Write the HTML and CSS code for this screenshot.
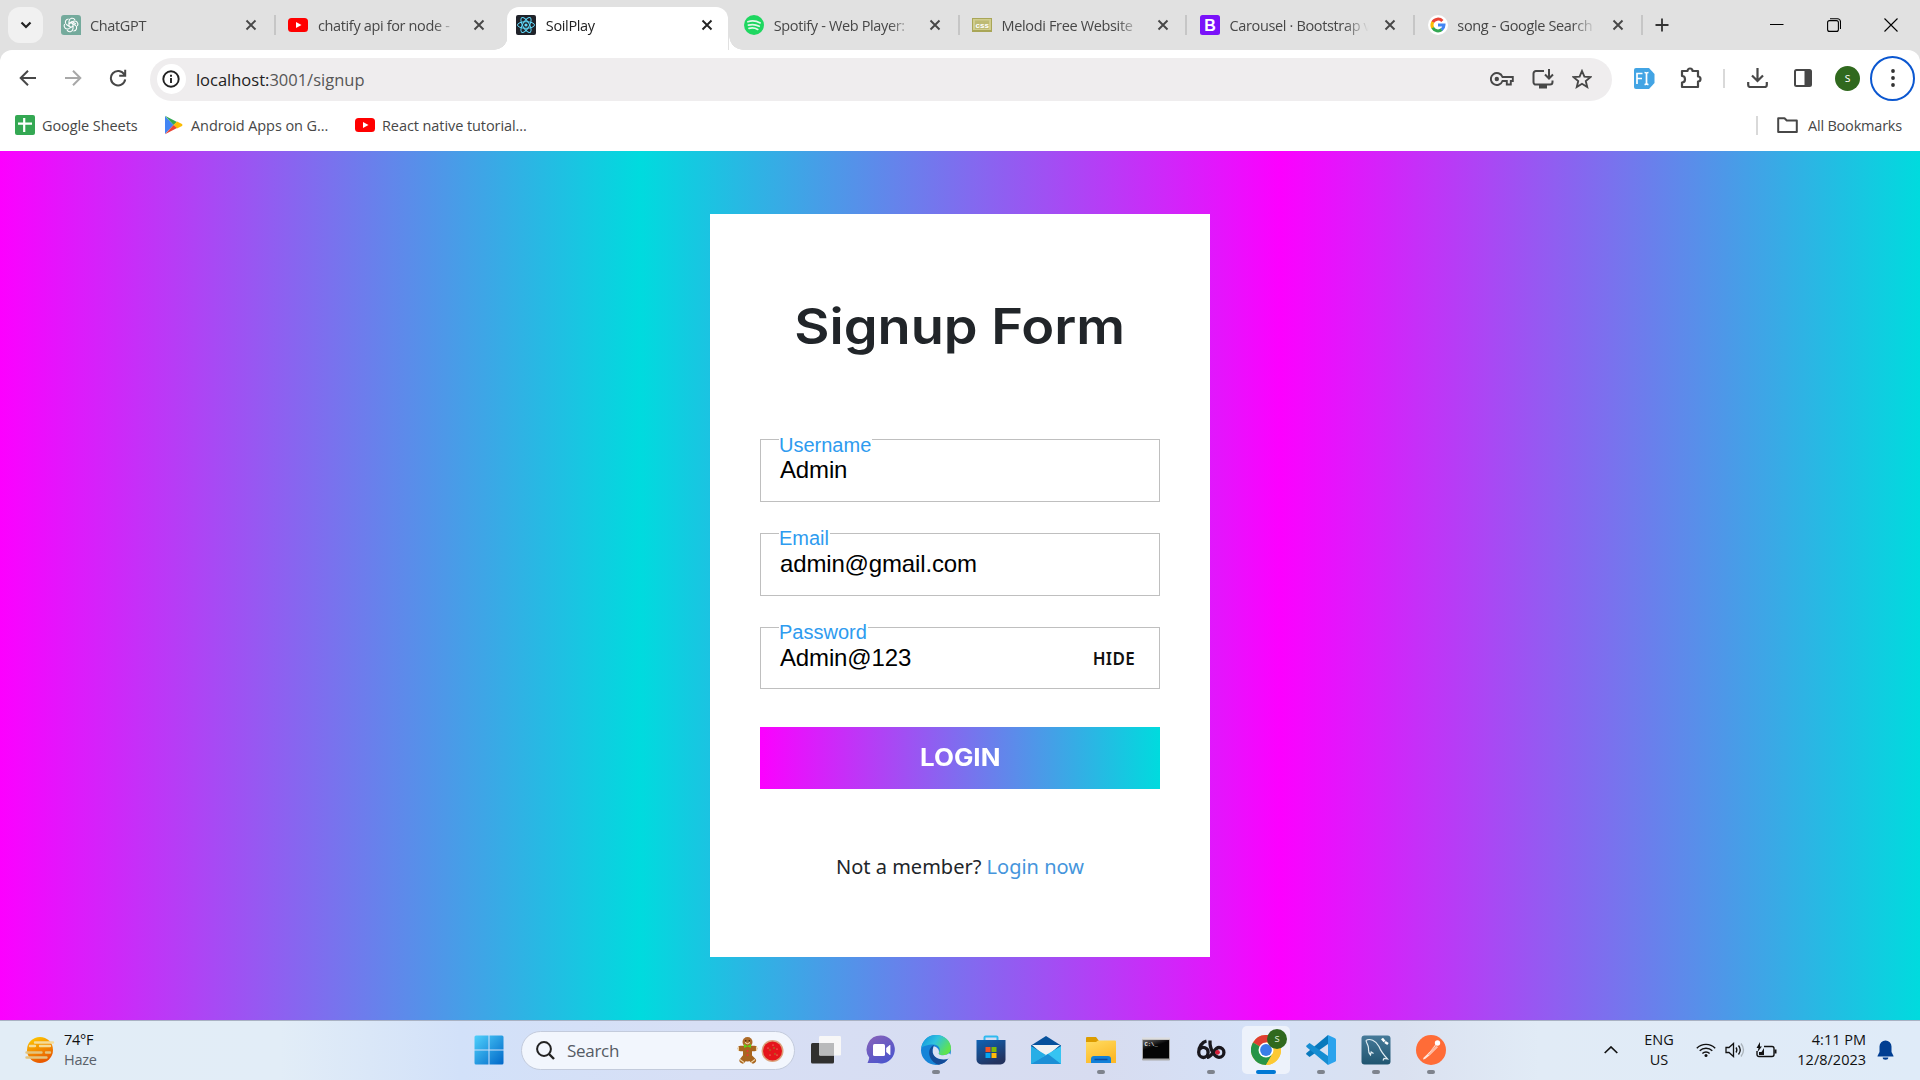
FILE: index.html
```html
<!DOCTYPE html>
<html lang="en">
<head>
<meta charset="utf-8">
<title>SoilPlay</title>
<link rel="stylesheet" href="styles.css">
</head>
<body>
<svg class="defs" width="0" height="0" aria-hidden="true">
  <defs>
    <symbol id="x" viewBox="0 0 12 12"><path d="M1.500 1.500l9 9M10.500 1.500l-9 9" fill="none" stroke="currentColor" stroke-width="1.900"/></symbol>
    <symbol id="yt" viewBox="0 0 20 20"><rect y="3" width="20" height="14" rx="3.500" fill="#f00"/><path d="M8 7l5.500 3L8 13z" fill="#fff"/></symbol>
    <linearGradient id="win" x2="1" y2="1"><stop stop-color="#4fd0fb"/><stop offset="1" stop-color="#0067c8"/></linearGradient>
    <linearGradient id="sun" x2=".4" y2="1"><stop stop-color="#ffd000"/><stop offset="1" stop-color="#e95a00"/></linearGradient>
    <linearGradient id="chat" x2=".6" y2="1"><stop stop-color="#8a63b8"/><stop offset="1" stop-color="#4d55cc"/></linearGradient>
    <linearGradient id="edge" x2="1" y2=".5"><stop stop-color="#0c8ddc"/><stop offset=".5" stop-color="#2fc2df"/><stop offset="1" stop-color="#5fe34f"/></linearGradient>
    <linearGradient id="store" x2=".5" y2="1"><stop stop-color="#0f63b5"/><stop offset="1" stop-color="#23335f"/></linearGradient>
    <linearGradient id="fold" x2=".5" y2="1"><stop stop-color="#ffdc62"/><stop offset="1" stop-color="#fdb927"/></linearGradient>
    <linearGradient id="sql" x2="0" y2="1"><stop stop-color="#467a99"/><stop offset="1" stop-color="#205570"/></linearGradient>
    <linearGradient id="cmd" x2=".5" y2="1"><stop stop-color="#666"/><stop offset=".45" stop-color="#050505"/></linearGradient>
  </defs>
</svg>
<div class="screen">
  <header class="browser">
    <div class="tabstrip">
      <button class="tab-search"><svg width="12" height="8" viewBox="0 0 12 8"><path d="M1.500 1.500L6 6l4.500-4.500" fill="none" stroke="#222" stroke-width="2.200"/></svg></button>
      <div class="tab sep">
        <svg class="fav" viewBox="0 0 20 20"><path d="M3 0h14a3 3 0 0 1 3 3v17H3a3 3 0 0 1-3-3V3a3 3 0 0 1 3-3z" fill="#74aa9c"/><g fill="none" stroke="#fff" stroke-width="1.100"><path id="petal" d="M8 11.500V6.200a3.200 3.200 0 0 1 6-1.300"/><path id="spoke" d="M8 8.300l3-1.700 4 2.300"/><use href="#petal" transform="rotate(60 10 10)"/><use href="#petal" transform="rotate(120 10 10)"/><use href="#petal" transform="rotate(180 10 10)"/><use href="#petal" transform="rotate(240 10 10)"/><use href="#petal" transform="rotate(300 10 10)"/></g></svg>
        <span class="title">ChatGPT</span><svg class="close"><use href="#x"/></svg>
      </div>
      <div class="tab">
        <svg class="fav"><use href="#yt"/></svg>
        <span class="title">chatify api for node -</span><svg class="close"><use href="#x"/></svg>
      </div>
      <div class="tab active">
        <svg class="fav" viewBox="0 0 20 20"><rect width="20" height="20" rx="2" fill="#20232a"/><g fill="none" stroke="#61dafb"><ellipse cx="10" cy="10" rx="8.500" ry="3.300"/><ellipse cx="10" cy="10" rx="8.500" ry="3.300" transform="rotate(60 10 10)"/><ellipse cx="10" cy="10" rx="8.500" ry="3.300" transform="rotate(120 10 10)"/></g><circle cx="10" cy="10" r="1.600" fill="#61dafb"/></svg>
        <span class="title">SoilPlay</span><svg class="close"><use href="#x"/></svg>
      </div>
      <div class="tab sep">
        <svg class="fav" viewBox="0 0 20 20"><circle cx="10" cy="10" r="10" fill="#1ed760"/><path d="M3.800 6.700c4.200-1.200 8.700-.8 12.400 1.200M4.400 10.100c3.700-1 7.500-.6 10.800 1.200M5 13.300c3-.7 6.100-.4 8.800 1.100" fill="none" stroke="#e5f7ea" stroke-width="1.700" stroke-linecap="round"/></svg>
        <span class="title">Spotify - Web Player:</span><svg class="close"><use href="#x"/></svg>
      </div>
      <div class="tab sep">
        <svg class="fav" viewBox="0 0 20 20"><rect y="3" width="20" height="14" fill="#a9a657"/><rect x="1" y="4" width="18" height="11" fill="#d0cd8e"/><rect x="3" y="5.500" width="14" height="8.500" fill="#bdba73"/><text x="3.500" y="12.700" class="css-mark">css</text></svg>
        <span class="title">Melodi Free Website</span><svg class="close"><use href="#x"/></svg>
      </div>
      <div class="tab sep">
        <svg class="fav" viewBox="0 0 20 20"><rect width="20" height="20" rx="2.500" fill="#7a12f9"/><text x="4.300" y="15.800" class="bs-mark">B</text></svg>
        <span class="title">Carousel · Bootstrap v</span><svg class="close"><use href="#x"/></svg>
      </div>
      <div class="tab sep">
        <svg class="fav" viewBox="0 0 20 20"><circle cx="10" cy="10" r="10" fill="#fff"/><g fill="none" stroke-width="3"><path d="M14.400 6.100A6 6 0 0 0 4.700 7.200" stroke="#ea4335"/><path d="M4.800 7a6 6 0 0 0 0 6" stroke="#fbbc05"/><path d="M4.700 12.800a6 6 0 0 0 9.100 1.700" stroke="#34a853"/><path d="M13.600 14.700A6 6 0 0 0 16 10h-6" stroke="#4285f4"/></g></svg>
        <span class="title">song - Google Search</span><svg class="close"><use href="#x"/></svg>
      </div>
      <button class="new-tab"><svg width="14" height="14" viewBox="0 0 14 14"><path d="M7 .5v13M.5 7h13" stroke="#333" stroke-width="1.800"/></svg></button>
      <div class="window-buttons">
        <svg width="14" height="14" viewBox="0 0 14 14"><path d="M0 6.500h13.500" stroke="#000"/></svg>
        <svg width="14" height="14" viewBox="0 0 14 14" fill="none" stroke="#000" stroke-width="1.100"><rect x=".6" y="2.600" width="10.800" height="10.800" rx="2"/><path d="M3 .8h7.500a3 3 0 0 1 3 3V11"/></svg>
        <svg width="14" height="14" viewBox="0 0 14 14"><path d="M.5.5l13 13M13.500.5l-13 13" stroke="#000" stroke-width="1.100"/></svg>
      </div>
    </div>

    <div class="toolbar">
      <div class="nav">
        <svg width="18" height="18" viewBox="0 0 18 18" fill="none" stroke="#474747" stroke-width="2"><path d="M17 9H2.500M9 1.700L1.700 9 9 16.300"/></svg>
        <svg width="18" height="18" viewBox="0 0 18 18" fill="none" stroke="#a8a8a8" stroke-width="2"><path d="M1 9h14.500M9 1.700L16.300 9 9 16.300"/></svg>
        <svg width="18" height="18" viewBox="0 0 18 18" fill="none" stroke="#474747" stroke-width="2"><path d="M15.300 5.500A7.200 7.200 0 1 0 16.200 10.300M16.200.8v6h-6"/></svg>
      </div>
      <div class="omnibox">
        <span class="info"><svg width="18" height="18" viewBox="0 0 18 18"><circle cx="9" cy="9" r="7.700" fill="none" stroke="#222" stroke-width="1.900"/><path d="M9 8v5M9 4.800v2" stroke="#222" stroke-width="1.900"/></svg></span>
        <span class="url">localhost:<span>3001/signup</span></span>
        <span class="page-actions">
          <svg width="24" height="14" viewBox="0 0 24 14" fill="none" stroke="#474747" stroke-width="1.900"><path d="M12.500 5h10.300v4h-2v3.500h-4V9h-4.300a6 6 0 1 1 0-4z"/><circle cx="6.800" cy="7" r="2.200" fill="#474747" stroke="none"/></svg>
          <svg width="22" height="20" viewBox="0 0 22 20" fill="none" stroke="#474747" stroke-width="2"><path d="M12 2H4a2.500 2.500 0 0 0-2.500 2.500v8.700A2.300 2.300 0 0 0 4 15.500h14a2.500 2.500 0 0 0 2.500-2.500v-1.500M17 0v9M13 5.500l4 4 4-4"/><path d="M7 15h8v4.500H7z" fill="#474747" stroke="none"/></svg>
          <svg width="20" height="20" viewBox="0 0 20 20"><path d="M10 2l2.400 5.600 6 .5-4.600 4 1.400 5.900-5.200-3.200L4.800 18l1.400-5.900-4.600-4 6-.5z" fill="none" stroke="#474747" stroke-width="1.900"/></svg>
        </span>
      </div>
      <div class="extensions">
        <svg width="21" height="21" viewBox="0 0 21 21"><path d="M2 0h13l5.500 6v9L15 21H2a2 2 0 0 1-2-2V2a2 2 0 0 1 2-2z" fill="#42a4e4"/><path d="M3 16V5.500h5.500M3 10.500h5M10.500 4.500c2 0 2 .5 2 1.500v9c0 1-.5 1.500-2 1.500m4-12c-2 0-2 .5-2 1.500m0 9c0 1 .5 1.500 2 1.500" fill="none" stroke="#fff" stroke-width="1.700"/></svg>
        <svg width="22" height="22" viewBox="0 0 22 22"><path d="M2 4H7.500a2.500 2.500 0 0 1 5 0H18v5.500a2.500 2.500 0 0 1 0 5V20H2v-4.500c4 0 4-6.500 0-6.500z" fill="none" stroke="#474747" stroke-width="2.200" stroke-linejoin="round"/></svg>
        <i class="divider"></i>
        <svg width="21" height="20" viewBox="0 0 21 20" fill="none" stroke="#474747" stroke-width="2.200"><path d="M10.500 0v12M5 7.500l5.500 5.500L16 7.500M1.200 14v3a2 2 0 0 0 2 2h14.600a2 2 0 0 0 2-2v-3"/></svg>
        <svg width="18" height="18" viewBox="0 0 18 18"><rect x="1" y="1" width="16" height="16" rx="1.500" fill="none" stroke="#474747" stroke-width="2"/><path d="M10.500 1H17v16h-6.500z" fill="#474747"/></svg>
        <span class="avatar">s</span>
        <span class="menu"><svg width="4" height="18" viewBox="0 0 4 18" fill="#333"><circle cx="2" cy="2" r="1.900"/><circle cx="2" cy="9" r="1.900"/><circle cx="2" cy="16" r="1.900"/></svg></span>
      </div>
    </div>

    <div class="bookmarks">
      <a class="bm sheets"><svg width="20" height="20" viewBox="0 0 20 20"><rect width="20" height="20" rx="2" fill="#34a853"/><path d="M9.200 3v14M3 8.700h14" stroke="#fff" stroke-width="2.200"/></svg><span>Google Sheets</span></a>
      <a class="bm play"><svg width="19" height="20" viewBox="0 0 19 20"><path d="M1 1l8.500 9L1 19z" fill="#4285f4"/><path d="M1 .8L13 7l-3.500 3z" fill="#34a853"/><path d="M13 6.600l5 2.400q1 1 0 2l-5 2.400L9.500 10z" fill="#fbbc04"/><path d="M1 19.200L13 13l-3.500-3z" fill="#ea4335"/></svg><span>Android Apps on G...</span></a>
      <a class="bm react"><svg width="20" height="20"><use href="#yt"/></svg><span>React native tutorial...</span></a>
      <a class="bm all"><i class="divider"></i><svg width="21" height="16" viewBox="0 0 21 16"><path d="M1.200 1.200h6.300L9.800 3.500h10V15H1.200z" fill="none" stroke="#474747" stroke-width="2" stroke-linejoin="round"/></svg><span>All Bookmarks</span></a>
    </div>
  </header>

  <main class="page">
    <form class="card">
      <h1><span>Signup Form</span></h1>
      <div class="field"><label>Username</label><span class="value">Admin</span></div>
      <div class="field"><label>Email</label><span class="value">admin@gmail.com</span></div>
      <div class="field last"><label>Password</label><span class="value">Admin@123</span><span class="hide">HIDE</span></div>
      <button type="button" class="login"><span>LOGIN</span></button>
      <p class="member">Not a member? <a>Login now</a></p>
    </form>
  </main>

  <footer class="taskbar">
    <div class="weather">
      <svg width="30" height="28" viewBox="0 0 30 28"><circle cx="15" cy="14" r="13" fill="url(#sun)"/><g stroke-width="2.400" stroke-linecap="round"><path d="M10 6.500h18M5 10h5M15 10h10" stroke="#f5dc98"/><path d="M1.500 16.500h15M21 16.500h4M1.500 21.500h20" stroke="#e3c47e"/></g></svg>
      <div><b>74°F</b><span>Haze</span></div>
    </div>
    <div class="apps">
      <div class="app"><svg viewBox="0 0 30 30"><path d="M2 .5h12.500v14H.5V2A1.500 1.500 0 0 1 2 .5zM15.500.5H28A1.500 1.500 0 0 1 29.500 2v12.500h-14zM.5 15.500h14v14H2A1.500 1.500 0 0 1 .5 28zM15.500 15.500h14V28a1.500 1.500 0 0 1-1.500 1.500H15.500z" fill="url(#win)"/></svg></div>
      <div class="search">
        <svg width="19" height="19" viewBox="0 0 19 19"><circle cx="8" cy="8" r="6.900" fill="none" stroke="#222" stroke-width="2"/><path d="M13 13l5 5" stroke="#222" stroke-width="2.400"/></svg>
        <span>Search</span>
        <svg class="treats" width="48" height="28" viewBox="0 0 48 28"><g stroke="#a8651f" stroke-linecap="round" fill="none"><path d="M4.500 12.500h14" stroke-width="5.500"/><path d="M8.500 22l-2 2.500M14.500 22l2.500 2.500" stroke-width="6"/><path d="M11.500 12v9" stroke-width="9"/></g><circle cx="11.500" cy="6" r="5" fill="#ad6b28"/><path d="M4 23.500l4 3M15 26.500l4-3M2.500 11v4M20.500 11v4" stroke="#f0d5a5" stroke-width="1.100"/><path d="M8 8l3.500 2L15 8v4l-3.500-1.500L8 12z" fill="#5fd016"/><path d="M9 6.500q2.500 2.500 5 0" stroke="#ffeac4" fill="none"/><circle cx="9.700" cy="4.700" r=".8" fill="#4d2108"/><circle cx="13.300" cy="4.700" r=".8" fill="#4d2108"/><circle cx="11.500" cy="15" r="1" fill="#e33"/><circle cx="11.500" cy="19" r="1" fill="#e33"/><circle cx="36.500" cy="15" r="11" fill="#dca27c"/><circle cx="36.500" cy="15" r="9.500" fill="#e5141b"/><g fill="#ffb49a"><circle cx="32" cy="12" r=".6"/><circle cx="37" cy="9" r=".6"/><circle cx="41" cy="13" r=".6"/><circle cx="34" cy="19" r=".6"/><circle cx="41" cy="19" r=".6"/></g><g fill="#71b92a"><circle cx="34" cy="14" r=".7"/><circle cx="39" cy="18" r=".7"/><circle cx="38" cy="12" r=".7"/></g></svg>
      </div>
      <div class="app"><svg viewBox="0 0 30 30"><rect y="8" width="23" height="20.500" rx="1.500" fill="#30302f"/><rect x="8" y="1" width="22" height="19.500" rx="1.200" fill="#f7f7f7"/><path d="M8 8h15v12.500H9a1 1 0 0 1-1-1z" fill="#b9babb"/></svg></div>
      <div class="app"><svg viewBox="0 0 30 30"><path d="M15 .5a14 14 0 1 1-3.500 27.600H1.500Q3 25 3.200 22.600A14 14 0 0 1 15 .5z" fill="url(#chat)"/><rect x="7" y="9" width="12" height="12" rx="1.500" fill="#fff"/><path d="M20.200 13l3.500-3q.7-.3.700.5v9q0 .8-.7.500l-3.500-3z" fill="#fff"/></svg></div>
      <div class="app run"><svg viewBox="0 0 30 30"><circle cx="15" cy="15" r="15" fill="#1684d8"/><path d="M.3 13C1.500 4.500 8 0 15 0c9 0 15 6.500 15 13 0 5-4 7.300-8 7.300-3.500 0-5-1.300-4-2.800 2.500-3.700-1-8-5.500-8C6 9.500 1.500 11.500.3 13z" fill="url(#edge)"/><path d="M13 10c-4 2-5.500 5.500-4.500 10.500S15 29.500 18 29.700c4-.8 7.500-3 9.500-6.700-6.500 3-15 .5-15.800-6-.3-2.500.3-4.500 1.300-7z" fill="#134b98"/><path d="M12.500 11.500c2-.5 6 2 5.500 6-1 1.500.5 2.800 4 2.800 2.500 0 4.500-.8 6-2 1.500.3 2 1.500 1.300 2.700l-1.500 2.500c-6 2.500-15 0-16-6-.2-2 0-4 .7-6z" fill="#d9e0f5"/></svg></div>
      <div class="app"><svg viewBox="0 0 30 30"><path d="M8.500 7V2.500q0-1 1-1h11q1 0 1 1V7" fill="none" stroke="#30baf0" stroke-width="2"/><path d="M.5 5h29v19.500a5 5 0 0 1-5 5h-19a5 5 0 0 1-5-5z" fill="url(#store)"/><path d="M9.500 12h5v5h-5z" fill="#f35325"/><path d="M15.500 12h5v5h-5z" fill="#81bc06"/><path d="M9.500 18h5v5h-5z" fill="#05a6f0"/><path d="M15.500 18h5v5h-5z" fill="#ffba08"/></svg></div>
      <div class="app"><svg viewBox="0 0 30 30"><path d="M0 10.500L15 1l15 9.500V20H0z" fill="#07519c"/><path d="M1 10h28L15 22z" fill="#f1f2f4"/><path d="M0 11l15 9-12 9H0z" fill="#27aee6"/><path d="M30 11L0 29h30z" fill="#36c4f2"/><path d="M17 19l13 10H0z" fill="#1c8fd6"/></svg></div>
      <div class="app run"><svg viewBox="0 0 30 30"><path d="M0 3a1 1 0 0 1 1-1h9l3 4v5H0z" fill="#dc9c00"/><path d="M0 7h10l2-1.500h17a1 1 0 0 1 1 1V28H0z" fill="url(#fold)"/><path d="M5 28v-4a3 3 0 0 1 3-3h14a3 3 0 0 1 3 3v4z" fill="#1280d8"/><path d="M8.500 24.500h13" stroke="#0c4ca0" stroke-width="1.500"/></svg></div>
      <div class="app"><svg viewBox="0 0 30 30"><rect x="1" y="3" width="28" height="22.500" rx="1" fill="#aaa"/><rect x="2" y="5" width="26" height="18.500" fill="url(#cmd)"/><path d="M1 3.500h28" stroke="#ddd" stroke-width="2"/><text x="3.500" y="10.500" class="cmd-mark">C:\_</text></svg></div>
      <div class="app run"><svg viewBox="0 0 30 30" fill="none" stroke="#19171d" stroke-width="3.300"><path d="M10.500 6C6 7 2.700 12 2.700 17.300a4.700 5.200 0 0 0 9.400 0 4.700 4.700 0 0 0-8.400-3"/><path d="M14 5.500C13.500 15 19 22.300 23 22.300a4.900 4.900 0 0 0 0-9.800c-5 0-6.500 9.800-12 9.800"/><circle cx="21.500" cy="17.300" r="2.400" fill="#d31e38" stroke="none"/></svg></div>
      <div class="app run current"><svg viewBox="0 0 30 30"><circle cx="15" cy="15" r="15" fill="#fcc934"/><path d="M15 15L2 7.500A15 15 0 0 1 28 7.500H15z" fill="#df3e33"/><path d="M2 7.500A15 15 0 0 0 15 30l6.500-11.200L15 15z" fill="#269447"/><path d="M15 7.500h13A15 15 0 0 1 15 30l6.500-11.200z" fill="#fcc934"/><circle cx="15" cy="15" r="7.500" fill="#fff"/><circle cx="15" cy="15" r="5.900" fill="#397ee8"/></svg><span class="profile">s</span></div>
      <div class="app run"><svg viewBox="0 0 30 30"><path d="M22 0v9L3.500 22 .5 19.500q-.7-.8 0-1.500z" fill="#0878bc"/><path d="M22 30v-9L3.500 8 .5 10.500q-.7.800 0 1.500z" fill="#168dd2"/><path d="M22 0l7 3.300q1 .5 1 1.500v20.400q0 1-1 1.500L22 30z" fill="#2ba3ed"/></svg></div>
      <div class="app run"><svg viewBox="0 0 30 30"><rect x=".5" y=".5" width="29" height="29" rx="3" fill="url(#sql)"/><path d="M5 5.500c3.500-2.500 10 0 13 6 1.500 4 3 6.500 8.500 12.500l-3.500-.5-1 2M5 5.500c.5 3 2.500 4.500 2.500 7.500s-.5 4.500 2 7l.7-3 2.300 1.500" fill="none" stroke="#e1edf3" stroke-width="1.200"/><path d="M21 3.500l2.500 3M24 7l3 2" stroke="#fff" stroke-width="2.600"/></svg></div>
      <div class="app run"><svg viewBox="0 0 30 30"><circle cx="15" cy="15" r="15" fill="#ff6c37"/><circle cx="21.500" cy="8" r="2.700" fill="#fff"/><path d="M19 10l3 2-8 8-5 4-2 .5.500-1.800 4.500-4.200z" fill="#ffe6dc"/><path d="M13 17l7-6M12.500 20l9-9" stroke="#ff6c37" stroke-width=".7"/></svg></div>
    </div>
    <div class="tray">
      <svg class="chev" width="14" height="8" viewBox="0 0 14 8"><path d="M.7 7L7 1l6.300 6" fill="none" stroke="#111" stroke-width="1.700"/></svg>
      <div class="lang"><span>ENG</span><span>US</span></div>
      <svg class="wifi" width="20" height="16" viewBox="0 0 20 16" fill="none" stroke="#111" stroke-width="1.400"><path d="M.8 6.200a13 13 0 0 1 18.400 0M3.700 8.800a9 9 0 0 1 12.600 0M6.400 11.500a5 5 0 0 1 7.200 0"/><circle cx="10" cy="13.500" r="1.500" fill="#111" stroke="none"/></svg>
      <svg class="vol" width="21" height="16" viewBox="0 0 21 16" fill="none" stroke="#111" stroke-width="1.300"><path d="M1 5.500h3l4.500-4v13L4 10.500H1zM11 5.500q1.800 2.500 0 5M13.500 3.500q3.500 4.500 0 9"/><path d="M16 1.500q5 6.500 0 13" stroke="#aab3bb"/></svg>
      <svg class="bat" width="21" height="17" viewBox="0 0 21 17"><path d="M8 4.500h8a2 2 0 0 1 2 2v6a2 2 0 0 1-2 2H3a2 2 0 0 1-2-2V9" fill="none" stroke="#111" stroke-width="1.400"/><path d="M18.500 7.500H20.500v4h-2zM4 0L.5 6h2L1.500 10 6 4.500H4zM3 13V10h2.500L8 6v7z" fill="#111"/></svg>
      <div class="clock"><span>4:11 PM</span><span>12/8/2023</span></div>
      <svg class="bell" width="17" height="20" viewBox="0 0 17 20" fill="#003e92"><path d="M8.500.5a6 6 0 0 1 6 6V12l2 4v.5H.5V16l2-4V6.500a6 6 0 0 1 6-6zM5.700 17.500h5.600a2.800 2.200 0 0 1-5.600 0z"/></svg>
    </div>
  </footer>
</div>
</body>
</html>
```

FILE: styles.css
```css
* { box-sizing: border-box; }
body { margin: 0; overflow: hidden; font-family: "Open Sans", "Noto Sans", sans-serif; }
button { border: 0; padding: 0; margin: 0; font: inherit; background: none; }
svg { display: block; flex: none; }
.defs { position: absolute; }
.screen { width: 1920px; height: 1080px; display: flex; flex-direction: column; }

/* Browser chrome */
.browser { height: 151px; flex: none; background: #e1e1e1; }
.tabstrip { height: 50px; display: flex; padding-left: 8px; }
.tab-search { width: 35px; height: 36px; margin: 7px 5px 0 0; border-radius: 12px; background: #f1f1f1; display: grid; place-items: center; }
.tab { width: 227.900px; flex: none; height: 50px; display: flex; align-items: center; padding-left: 12.500px; position: relative; font-size: 14.500px; color: #474747; }
.tab.sep::after { content: ""; position: absolute; right: 0; top: 15px; width: 2px; height: 20px; background: #c6c6c6; }
.fav { width: 20px; height: 20px; }
.title { width: 144px; margin: 0 11px 0 9.500px; white-space: nowrap; letter-spacing: -.35px; -webkit-mask-image: linear-gradient(90deg, #000 80%, transparent 97%); mask-image: linear-gradient(90deg, #000 80%, transparent 97%); }
.close { width: 12px; height: 12px; }
.tab.active { color: #222; }
.tab.active > * { position: relative; }
.tab.active::before { content: ""; position: absolute; inset: 7px 3.500px 0 3.500px; background: #fff; border-radius: 12px 12px 0 0; }
.tab.active::after { content: ""; position: absolute; left: -10px; right: -11px; bottom: 0; height: 14px; background: radial-gradient(circle at 0 0, transparent 13.500px, #fff 14px) left / 14px 14px no-repeat, radial-gradient(circle at 14px 0, transparent 13.500px, #fff 14px) right / 14px 14px no-repeat; }
.css-mark { font: bold 8px "Liberation Sans", sans-serif; fill: #fff; }
.bs-mark { font: bold 16px "Liberation Sans", sans-serif; fill: #fff; }
.cmd-mark { font: bold 5.500px "Liberation Mono", monospace; fill: #eee; }
.new-tab { width: 38px; display: grid; place-items: center; }
.window-buttons { margin-left: auto; padding-right: 22px; display: flex; align-items: center; gap: 43px; }

.toolbar { height: 51px; display: flex; align-items: center; padding-top: 5px; background: #fff; border-radius: 12px 12px 0 0; }
.nav { width: 150px; display: flex; gap: 27px; padding-left: 19px; }
.omnibox { width: 1463px; height: 43px; margin-top: 2px; border-radius: 22px; background: #efedee; display: flex; align-items: center; padding: 0 20px 0 7px; }
.info { width: 29px; height: 30px; border-radius: 50%; background: #fff; display: grid; place-items: center; }
.url { margin-left: 10px; font-size: 16.500px; letter-spacing: 0; color: #222; }
.url span { color: #565656; }
.page-actions { margin-left: auto; display: flex; align-items: center; gap: 18px; }
.extensions { flex: 1; display: flex; align-items: center; padding: 0 5px 0 22px; }
.extensions svg:nth-of-type(2) { margin-left: 25px; }
.divider { width: 2px; height: 19px; background: #d9d9d9; }
.extensions .divider { margin: 0 22px 0 21px; }
.extensions svg:nth-of-type(4) { margin: 0 23px 0 26px; }
.avatar { width: 25px; height: 25px; border-radius: 50%; background: #30691e; color: #fff; font-size: 12px; line-height: 24px; text-align: center; margin-right: 10px; }
.menu { width: 45px; height: 45px; border: 2px solid #0b57d0; border-radius: 50%; display: grid; place-items: center; flex: none; }
.bookmarks { height: 50px; display: flex; align-items: center; background: #fff; padding: 0 18px 2px 15px; font-size: 14.500px; letter-spacing: -.08px; color: #474747; white-space: nowrap; }
.bm { display: flex; align-items: center; }
.bm span { margin-left: 7px; }
.sheets { width: 149px; }
.play { width: 191px; }
.play span { margin-left: 8px; }
.all { margin-left: auto; letter-spacing: -.2px; }
.all svg { margin-left: 19px; }
.all span { margin-left: 10px; }

/* Signup page */
.page { height: 869px; flex: none; display: flex; justify-content: center; align-items: flex-start; padding-top: 63px; background: linear-gradient(to left, #00dbde, #fc00ff, #00dbde, #fc00ff); }
.card { width: 500px; height: 743px; background: #fff; padding: 83px 50px 0; display: flex; flex-direction: column; }
h1 { margin: 0 0 82px; height: 60px; text-align: center; font: 600 49px/60px Inter, sans-serif; color: #212529; white-space: nowrap; }
h1 span { display: inline-block; transform: scaleX(1.105); }
.field { position: relative; height: 63px; flex: none; margin-bottom: 31px; border: 1px solid #bfbfbf; display: flex; align-items: center; justify-content: space-between; padding: 0 24px 0 19px; font-family: "Liberation Sans", Arial, sans-serif; }
.field label { position: absolute; left: 18px; top: -7px; padding: 0 1px 0 0; font-size: 20px; line-height: 22px; color: #2e9bef; background: #fff; }
.field:first-of-type label { top: -6px; }
.value { font-size: 24px; letter-spacing: -.15px; color: #000; padding-bottom: 1px; }
.field.last { height: 62px; margin-bottom: 32px; }
.hide { font: 600 17px "Noto Sans", "Open Sans", sans-serif; color: #111; letter-spacing: .3px; }
.login { height: 62px; flex: none; margin-top: 6px; padding-bottom: 2px; background: linear-gradient(to left, #00dbde, #fc00ff); color: #fff; font: 700 24px Inter, sans-serif; }
.login span { display: inline-block; transform: scaleX(1.08); }
.member { margin: 64px 0 0; text-align: center; font: 20px/28px "Noto Sans", sans-serif; color: #212529; }
.member a { color: #4595dc; }

/* Taskbar */
.taskbar { height: 60px; flex: none; display: flex; align-items: center; padding-bottom: 1px; border-top: 1px solid #a9b2c3; background: linear-gradient(90deg, #e2edf6 0, #e2edf7 280px, #d2e1f9 460px, #d7dff5 700px, #d7dcf0 1100px, #d5e1f7 1250px, #dae1f0 1400px, #e1ebf6 1540px, #dfebf8 100%); }
.weather { width: 461px; padding-left: 25px; display: flex; align-items: center; gap: 9px; font-size: 14.500px; line-height: 20px; letter-spacing: -.3px; color: #5a616a; }
.weather > div { padding-bottom: 1px; }
.weather b { display: block; font-weight: 400; color: #111; }
.apps { display: flex; align-items: center; height: 100%; }
.app { width: 55px; height: 100%; display: grid; place-items: center; position: relative; }
.app svg { width: 30px; height: 30px; position: relative; }
.run::after { content: ""; position: absolute; left: 24px; bottom: 5px; width: 8px; height: 4px; border-radius: 2px; background: #7e838d; }
.current::before { content: ""; position: absolute; inset: 5px 3px 5px 4px; border-radius: 5px; background: #edf2fb; }
.current::after { left: 18px; width: 20px; background: #0078d4; }
.profile { position: absolute; left: 29px; top: 8px; width: 20px; height: 20px; border-radius: 50%; background: #30691e; color: #dce8d6; font-size: 11px; line-height: 18px; text-align: center; }
.search { width: 274px; height: 39px; margin: 0 3px 0 5px; border-radius: 20px; background: #f2f6fd; border: 1px solid #c3cbdc; display: flex; align-items: center; padding: 0 10px 0 14px; color: #555b64; font-size: 17px; letter-spacing: -.3px; }
.search span { margin-left: 12px; }
.treats { margin-left: auto; }
.tray { margin-left: auto; display: flex; align-items: center; padding-right: 26px; color: #111; font-size: 14.500px; line-height: 20px; letter-spacing: 0; }
.lang, .clock { display: flex; flex-direction: column; padding-bottom: 1px; }
.lang { width: 40px; margin-left: 21px; align-items: center; }
.wifi { margin-left: 17px; }
.vol { margin-left: 9px; }
.bat { margin-left: 10px; }
.clock { width: 89px; align-items: flex-end; }
.bell { margin-left: 11px; }
```
